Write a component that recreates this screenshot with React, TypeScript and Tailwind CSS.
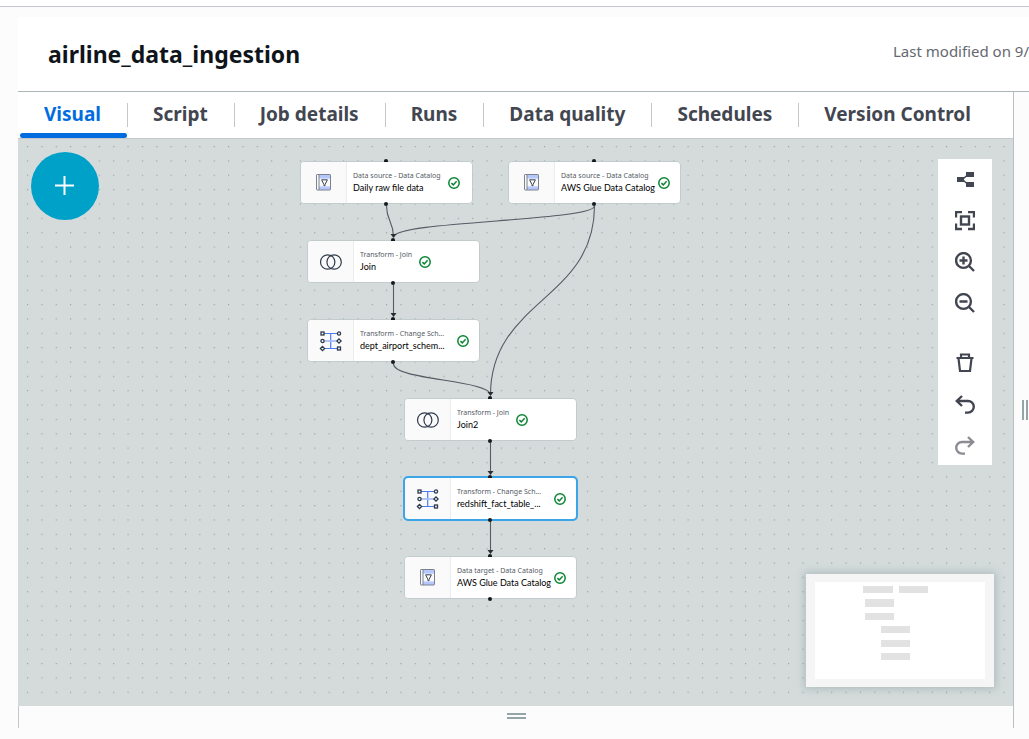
import React from 'react';

type IconKind = 'catalog' | 'join' | 'schema';

interface GraphNode {
  id: string;
  place: string;
  kind: IconKind;
  type: string;
  name: string;
  selected?: boolean;
}

const tabs = ['Visual', 'Script', 'Job details', 'Runs', 'Data quality', 'Schedules', 'Version Control'];

const nodes: GraphNode[] = [
  { id: 'raw', place: 'left-[282px] top-[22px]', kind: 'catalog', type: 'Data source - Data Catalog', name: 'Daily raw file data' },
  { id: 'glue', place: 'left-[490px] top-[22px]', kind: 'catalog', type: 'Data source - Data Catalog', name: 'AWS Glue Data Catalog' },
  { id: 'join', place: 'left-[289px] top-[101px]', kind: 'join', type: 'Transform - Join', name: 'Join' },
  { id: 'dept', place: 'left-[289px] top-[180px]', kind: 'schema', type: 'Transform - Change Sch...', name: 'dept_airport_schem...' },
  { id: 'join2', place: 'left-[386px] top-[259px]', kind: 'join', type: 'Transform - Join', name: 'Join2' },
  { id: 'fact', place: 'left-[386px] top-[338px]', kind: 'schema', type: 'Transform - Change Sch...', name: 'redshift_fact_table_...', selected: true },
  { id: 'target', place: 'left-[386px] top-[417px]', kind: 'catalog', type: 'Data target - Data Catalog', name: 'AWS Glue Data Catalog' },
];

const edges = [
  'M368.5 67 C368.5 82 375.5 82 375.5 98',
  'M576.5 67 C576.5 82 375.5 82 375.5 98',
  'M375.5 146 V176',
  'M375.5 225 C375.5 241 472.5 241 472.5 256',
  'M576.5 67 C576.5 161 472.5 161 472.5 256',
  'M472.5 304 V334',
  'M472.5 383 V413',
];

const arrowTips = [
  [375.5, 99],
  [375.5, 178],
  [472.5, 257],
  [472.5, 336],
  [472.5, 415],
];

function CatalogIcon() {
  return (
    <svg width="15" height="17" viewBox="0 0 15 17" fill="none" aria-hidden="true">
      <rect x="3" y="1" width="11" height="3.6" fill="#b5c7ff" />
      <rect x="3" y="12.4" width="11" height="3.6" fill="#b5c7ff" />
      <rect x="0.5" y="0.5" width="14" height="15.5" rx="0.6" stroke="#7b828c" />
      <path d="M3 1V16" stroke="#7b828c" />
      <path d="M5.6 5.8H11.4L9.1 10.4V11.6H7.9V10.4Z" stroke="#3c4454" />
    </svg>
  );
}

function JoinIcon() {
  return (
    <svg width="24" height="18" viewBox="0 0 24 18" fill="none" stroke="#2f3a4c" strokeWidth="1.2" aria-hidden="true">
      <circle cx="8.7" cy="9" r="7.2" />
      <circle cx="15.1" cy="9" r="7.2" />
    </svg>
  );
}

function SchemaIcon() {
  return (
    <svg width="24" height="22" viewBox="0 0 24 22" fill="none" aria-hidden="true">
      <path d="M5 3.5H18M5 18.5H18M11.7 3.5V18.5" stroke="#4d7cf0" strokeWidth="1.2" />
      <path d="M5 11H18" stroke="#a9bffb" strokeWidth="1.8" />
      <g stroke="#2f3a4c" strokeWidth="1.3" fill="#fafafa">
        <rect x="2" y="2" width="3" height="3" />
        <circle cx="3.5" cy="11" r="1.6" />
        <path d="M3.5 16.4L5.6 18.5L3.5 20.6L1.4 18.5Z" />
        <circle cx="20" cy="3.5" r="1.6" />
        <path d="M20 8.9L22.1 11L20 13.1L17.9 11Z" />
        <rect x="18.5" y="17" width="3" height="3" />
      </g>
    </svg>
  );
}

function CheckIcon() {
  return (
    <svg className="shrink-0" width="12" height="12" viewBox="0 0 12 12" fill="none" stroke="#0b8534" strokeWidth="1.5" role="img" aria-label="Valid">
      <circle cx="6" cy="6" r="5.2" />
      <path d="M3.4 6.1L5.3 7.9L8.6 4.3" />
    </svg>
  );
}

function NodeCard({ node }: { node: GraphNode }) {
  const frame = node.selected
    ? 'border-[#c2cccc] outline-2 -outline-offset-1 outline-[#3ba5e8]'
    : 'border-[#c2cccc]';
  return (
    <button type="button" className={`absolute flex h-[43px] w-[173px] rounded-sm border bg-white text-left ${frame} ${node.place}`}>
      <span className="absolute -top-[3px] left-[83px] h-[3px] w-1 rounded-t-sm bg-[#16191f]" />
      <span className="absolute -bottom-[3px] left-[83px] size-1 rounded-full bg-[#16191f]" />
      <span className="flex h-full w-[46px] shrink-0 items-center justify-center rounded-l-sm border-r border-[#eaeded] bg-[#fafafa]">
        {node.kind === 'catalog' && <CatalogIcon />}
        {node.kind === 'join' && <JoinIcon />}
        {node.kind === 'schema' && <SchemaIcon />}
      </span>
      <span className="flex h-full items-center gap-[7px] pl-[6px]">
        <span className={`flex max-w-[90px] flex-col pb-[2px] whitespace-nowrap ${node.kind === 'schema' ? 'w-[90px]' : ''}`}>
          <span className="text-[7px] leading-[12px] text-[#545b64]">{node.type}</span>
          <span className="font-[Lato,sans-serif] text-[9px] leading-[12px] text-black">{node.name}</span>
        </span>
        <CheckIcon />
      </span>
    </button>
  );
}

function ToolButton({ label, muted, children }: { label: string; muted?: boolean; children: React.ReactNode }) {
  return (
    <button type="button" aria-label={label} className={`flex h-[41px] w-full items-center justify-center ${muted ? 'text-[#8c8c94]' : 'text-[#424650]'}`}>
      <svg width="20" height="20" viewBox="0 0 20 20" fill="none" stroke="currentColor" strokeWidth="2.4" aria-hidden="true">
        {children}
      </svg>
    </button>
  );
}

function Toolbar() {
  return (
    <div role="toolbar" aria-label="Canvas tools" className="absolute top-5 right-[21px] w-[54px] bg-white">
      <ToolButton label="Auto layout">
        <path d="M8 9L13 4.5M8 10L13 14.5" strokeWidth="1.4" />
        <path d="M2 7H9V12H2ZM11 2H19V7H11ZM11 12H19V17H11Z" fill="currentColor" stroke="none" />
      </ToolButton>
      <ToolButton label="Fit to screen">
        <path d="M1 6.5V1H7M13 1H19V6.5M19 12.5V18H13M7 18H1V12.5" />
        <rect x="6" y="5.5" width="8" height="8" />
      </ToolButton>
      <ToolButton label="Zoom in">
        <circle cx="8.5" cy="8.5" r="7.4" />
        <path d="M14 14L19 19M4.5 8.5H12.5M8.5 4.5V12.5" />
      </ToolButton>
      <ToolButton label="Zoom out">
        <circle cx="8.5" cy="8.5" r="7.4" />
        <path d="M14 14L19 19M4.5 8.5H12.5" />
      </ToolButton>
      <div className="h-[19px]" />
      <ToolButton label="Delete">
        <path d="M1.5 5H18.5M6 4.8V1.5H14V4.8M3.5 5.5L5 18H15L16.5 5.5" strokeWidth="2.2" />
      </ToolButton>
      <ToolButton label="Undo">
        <path d="M7 2L1.8 7L7 12M2 7H13A5.7 5.7 0 0 1 13 18.6H10" />
      </ToolButton>
      <ToolButton label="Redo" muted>
        <path d="M13 2L18.2 7L13 12M18 7H7A5.7 5.7 0 0 0 7 18.6H10" />
      </ToolButton>
    </div>
  );
}

function MiniMap() {
  return (
    <div className="absolute right-[19px] bottom-[19px] bg-[#f5f5f5] px-[9px] py-2 shadow-[0_0_8px_2px_rgba(120,145,145,0.4)]">
      <svg width="170" height="97" viewBox="0 0 170 97" className="bg-white" role="img" aria-label="Graph overview">
        <g fill="#e2e2e2">
          <rect x="48" y="4" width="30" height="7" />
          <rect x="84" y="4" width="29" height="7" />
          <rect x="50" y="17" width="29" height="8" />
          <rect x="50" y="31" width="29" height="7" />
          <rect x="66" y="44" width="29" height="7" />
          <rect x="66" y="58" width="29" height="7" />
          <rect x="66" y="71" width="29" height="7" />
        </g>
      </svg>
    </div>
  );
}

function Canvas() {
  return (
    <section aria-label="Job graph" className="relative min-h-[480px] flex-1 overflow-hidden bg-[#d5dbdb]">
      <svg className="absolute inset-0 size-full" aria-hidden="true">
        <defs>
          <pattern id="dots" x="9" y="7" width="14.36" height="14.36" patternUnits="userSpaceOnUse">
            <circle cx="0.6" cy="0.6" r="0.6" fill="#879596" />
          </pattern>
        </defs>
        <rect width="100%" height="100%" fill="url(#dots)" />
        {edges.map((d) => (
          <path key={d} d={d} fill="none" stroke="#545b64" strokeWidth="1.1" />
        ))}
        {arrowTips.map(([x, y]) => (
          <path key={`${x}-${y}`} d={`M${x - 3} ${y - 4}H${x + 3}L${x} ${y}Z`} fill="#2a2e33" />
        ))}
      </svg>
      <button type="button" aria-label="Add node" className="absolute top-[13px] left-[13px] flex size-[68px] items-center justify-center rounded-full bg-[#00a1c9]">
        <svg width="20" height="20" viewBox="0 0 20 20" stroke="white" strokeWidth="2" aria-hidden="true">
          <path d="M9.5 0V19M0 9.5H19" />
        </svg>
      </button>
      {nodes.map((node) => (
        <NodeCard key={node.id} node={node} />
      ))}
      <Toolbar />
      <MiniMap />
    </section>
  );
}

export default function App() {
  return (
    <div className="flex min-h-screen flex-col overflow-hidden bg-[#fcfcfc] pb-[11px] pl-[18px] font-['Noto_Sans',sans-serif]">
      <div className="-ml-[18px] h-[7px] shrink-0 border-b border-[#c6c6cd] bg-white" />
      <header className="mt-[10px] flex h-[75px] shrink-0 items-center justify-between border-b border-[#aab7b8] bg-white pl-[30px]">
        <h1 className="text-[23px] leading-8 font-bold text-[#0f141a]">airline_data_ingestion</h1>
        <p className="pb-[6px] text-[15px] leading-5 whitespace-nowrap text-[#656871]">Last modified on 9/</p>
      </header>
      <div className="flex flex-1">
        <main className="flex min-w-0 flex-1 flex-col border-r border-[#b9bfc2]">
          <div role="tablist" className="flex h-[47px] shrink-0 border-b border-[#c6c6cd] bg-white pl-px">
            {tabs.map((tab, i) => (
              <button
                key={tab}
                type="button"
                role="tab"
                aria-selected={i === 0}
                className={`relative flex h-full items-start pt-[11px] text-[19px] leading-[22px] font-bold whitespace-nowrap ${i === 0 ? 'text-[#006ce0]' : 'text-[#424650]'}`}
              >
                <span className={`pr-[26px] pb-[2px] pl-[25px] ${i < tabs.length - 1 ? 'border-r border-[#c6c6cd]' : ''}`}>{tab}</span>
                {i === 0 && <span className="absolute inset-x-px bottom-0 h-[5px] rounded-sm bg-[#006ce0]" />}
              </button>
            ))}
          </div>
          <Canvas />
          <div className="flex h-[22px] shrink-0 items-center justify-center border-l border-[#c6c6cd] pb-[2px]">
            <div className="flex w-[19px] flex-col gap-[2px]">
              <div className="h-[2px] bg-[#95a5a6]" />
              <div className="h-[2px] bg-[#95a5a6]" />
            </div>
          </div>
        </main>
        <div className="flex w-[15px] shrink-0 items-center justify-end gap-[2px] pr-px">
          <div className="h-5 w-[2px] bg-[#95a5a6]" />
          <div className="h-5 w-[2px] bg-[#95a5a6]" />
        </div>
      </div>
    </div>
  );
}
